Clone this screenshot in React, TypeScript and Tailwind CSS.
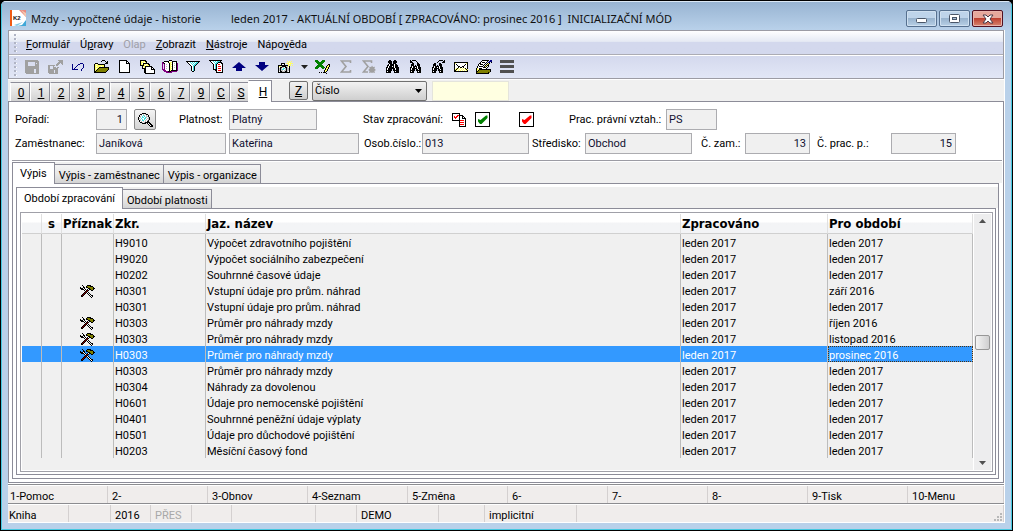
import React from "react";

const PALETTE: Record<string, string> = {
  k: "#000000",
  w: "#ffffff",
  g: "#a0a0a0",
  n: "#000080",
  y: "#ffff66",
  o: "#808000",
  r: "#ff0000",
  d: "#800000",
  p: "#800080",
  t: "#40e0e0",
  e: "#008000",
  c: "#c0c0c0",
  s: "#505050",
};

function Pixels({ rows }: { rows: string[] }) {
  const width = Math.max(...rows.map((r) => r.length));
  return (
    <svg
      width={width}
      height={rows.length}
      viewBox={`0 0 ${width} ${rows.length}`}
      shapeRendering="crispEdges"
      aria-hidden="true"
      className="shrink-0"
    >
      {rows.flatMap((row, y) =>
        row
          .split("")
          .map((c, x) =>
            PALETTE[c] ? <rect key={`${x}-${y}`} x={x} y={y} width="1" height="1" fill={PALETTE[c]} /> : null,
          ),
      )}
    </svg>
  );
}

const SAVE = [
  "ggggggggggggg.",
  "gggggggggggggg",
  "ggg.......gggg",
  "ggg.......g.gg",
  "ggg.......gggg",
  "ggg.......gggg",
  "gggggggggggggg",
  "gggggggggggggg",
  "gggggggggggggg",
  "ggggggggg..ggg",
  "ggggggggg..ggg",
  "ggggggggg..ggg",
  "ggggggggg..ggg",
  ".ggggggggggggg",
];
const SAVE_AS = [
  "..........ggggg",
  "...........gggg",
  "..........ggggg",
  ".........ggg.gg",
  "........ggg...g",
  "ggggggg.gg.....",
  "gg...g.........",
  "gg...ggg.gg....",
  "gg...ggggg.....",
  "gggggggggg.....",
  "gggggg.ggg.....",
  "gggggg.ggg.....",
  "gggggg.ggg.....",
  ".ggggggggg.....",
];
const UNDO = [
  "........nnn.",
  "n.....nn...n",
  "n....n.....n",
  "n...n......n",
  "n..n.......n",
  "n.n.......n.",
  "nnnnnn...n..",
  ".........n..",
];
const OPEN = [
  ".........kkk....",
  "........k...k.k.",
  ".............kk.",
  "..kkk.......kkk.",
  ".kywykkkkkkk....",
  ".kyyyyyyyyyk....",
  ".kywyyyywyyk....",
  ".kyyyykkkkkkkkkk",
  ".kywykoooooooook",
  ".kyykooooooooook",
  ".kykooooooooook.",
  ".kkooooooooook..",
  ".kkkkkkkkkkkk...",
];
const NEW_DOC = [
  "kkkkkkkk...",
  "kwwwwwwkk..",
  "kwwwwwwkwk.",
  "kwwwwwwkkkk",
  "kwwwwwwwwwk",
  "kwwwwwwwwwk",
  "kwwwwwwwwwk",
  "kwwwwwwwwwk",
  "kwwwwwwwwwk",
  "kwwwwwwwwwk",
  "kwwwwwwwwwk",
  "kwwwwwwwwwk",
  "kkkkkkkkkkk",
];
const COPIES = [
  "kkkkkk.........",
  "kywyykk........",
  "kyyywyk........",
  "kywkkkkkk......",
  "kyykyywykk.....",
  "kkkkywyyyk.....",
  "..kyykkkkkkk...",
  "..kwykwwwwwkk..",
  "..kkkkwwwwwkwk.",
  "....kkwwwwwkkkk",
  "....kkwwwwwwwwk",
  "....kkwwwwwwwwk",
  "....kkwwwwwwwwk",
  ".....kkkkkkkkkk",
];
const BOOK = [
  ".......kkk......",
  "..kkkkkwwwkkkkk.",
  "pkwwwwkyyykwwwk.",
  "ppkwwwwkywkwcwkp",
  "p.pwcwwkyykwwwkp",
  "p.pwwwwkywkwcwkp",
  "p.pwcwwkyykwwwkp",
  "p.pwwwwkywkwcwkp",
  "p.pwcwwkyykwwwkp",
  "pppwwwwkywkwwwkp",
  ".pppwwwkykkkkkkp",
  "..ppppkkkpppppp.",
  "....pppppp......",
];
const FILTER = [
  "kkkkkkkkkkkkkk",
  ".kwwtwtwtwttk.",
  "..kwwtwtwttk..",
  "...kwwtwttk...",
  "....kwwttk....",
  ".....kwtk.....",
  ".....kwtk.....",
  ".....kwtk.....",
  ".....kwtk.....",
  ".....kwtk.....",
  "......kk......",
];
const FILTER_DOC = [
  "kkkkkkkkkkkkk.",
  ".kwwtwtwtttk..",
  "..kwwtwttkkkk.",
  "...kwwttkwwwkk",
  "....kwtkwrrwwk",
  "....kwtkwwwwwk",
  "....kwtkwrrrwk",
  "....kwtkwwwwwk",
  "....kwtkwrrrwk",
  "....kkkkwwwwwk",
  "......kkwrrrwk",
  ".......kwwwwwk",
  ".......kkkkkkk",
];
const CAMERA = [
  "..........y.y.y.",
  "...........yyy..",
  "....kkkk.yyywyyy",
  "....kwwk...yyy..",
  ".kkkkkkkkkky.y.y",
  ".kyyckkkkccyk...",
  ".kwkkccwkkcwk...",
  ".kckcwttckcck...",
  ".kckcttwckcck...",
  ".kckccwcckcck...",
  ".kwkkccckkcwk...",
  ".kkkkkkkkkkkk...",
];
const EXCEL = [
  "eee....eee......",
  "eeee..eeee......",
  ".eeeeeeee.......",
  "..eeeeee........",
  "...eeee......kk.",
  "..eeeeee....kyk.",
  ".eeeeeeee..kyyk.",
  "eeee..eeee.kyk..",
  "eee....ee.kyyk..",
  "..........kyk...",
  ".........kyyk...",
  ".........kyk....",
  "....k.k.kkk.....",
  "...........k....",
];
const BINOCULARS = [
  "....kk...kk....",
  "...kkkk.kkkk...",
  "...kkkk.kkkk...",
  "....kkk.kkk....",
  "...kwkkkkwkk...",
  "..kkwkkkkwkkk..",
  "..kwkkkwkwkkk..",
  ".kkwkkkkkwkkkk.",
  ".kwkkkkkkkwkkk.",
  ".kwkkkk.kkwkkk.",
  ".kkkkkk.kkkkkk.",
  ".kwkkk...kwkkk.",
  ".kkkkk...kkkkk.",
];
const BINOCULARS_BACK = [
  "..k.kkkk.......",
  "..kk....k......",
  "..kkk....k.....",
  "....kk...kk....",
  "...kkk...kkk...",
  "...kkk.k.kkk...",
  "...kwkkkkwkk...",
  "..kkwkkwkwkkk..",
  "..kwkkkkkwkkk..",
  "..kwkkk.kkwkk..",
  "..kkkkk.kkkkk..",
  "..kwkk...kwkk..",
  "..kkkk...kkkk..",
];
const BINOCULARS_NEXT = [
  "........kkkk.k.",
  ".......k....kk.",
  "......k....kkk.",
  "...kk...kk.....",
  "..kkk...kkk....",
  "..kkk.k.kkk....",
  "..kwkkkkwkk....",
  ".kkwkkwkwkkk...",
  ".kwkkkkkwkkk...",
  ".kwkkk.kkwkk...",
  ".kkkkk.kkkkk...",
  ".kwkk...kwkk...",
  ".kkkk...kkkk...",
];
const MAIL = [
  "kkkkkkkkkkkkkk",
  "kywwwwwwwwwwyk",
  "kwkwwwwwwwwkwk",
  "kwwkwwwwwwkwwk",
  "kwwwkkwwkkwwwk",
  "kwwwkwkkwkwwwk",
  "kwykywywywykwk",
  "kykywywywywyky",
  "kkywywywywywyk",
  "kkkkkkkkkkkkkk",
];
const FOLDER_EDIT = [
  "......kkkkkkk.nn",
  ".....kwwwwwk.nnn",
  "....kwkkkwk.nn.k",
  "...kkwwwwk.kyk..",
  "..kwkkkwk.kyk...",
  "..kwwwwk.kykk...",
  ".kwkkkk.kykwk...",
  ".kwwwwwkkkwk....",
  "kywkkkwwwwk.....",
  "kyykkkkkkkkkkkk.",
  "kykoooooooooook.",
  "kkooooooooooook.",
  "koooooooooooko..",
  "kkkkkkkkkkkkk...",
];
const TOOLS = [
  "..k....kkkk....",
  "...k..koookkk..",
  "k..kk.kkoooook.",
  "kkkwk...kkoookk",
  ".kkkwk.kwkkook.",
  "....kwkdk..kk..",
  ".....kdk.......",
  "....kdkwk......",
  "...kdk.kwk.....",
  "..kdk...kwk....",
  ".kdk.....kwkk..",
  ".kk.......kwk..",
  "...........k...",
];
const STATUS_DOCS = [
  "kkkkkkkk.......",
  "kwwwwwwk.......",
  "kwwwwrrkkkk....",
  "kwrwrrwkwwkk...",
  "kwrrrwwkwwkwk..",
  "kwwrwwwkwwkkkk.",
  "kwwwwwwkwwwwwk.",
  "kkkkkkkkrrrrwk.",
  ".......kwwwwwk.",
  ".......krrrrwk.",
  ".......kwwwwwk.",
  ".......krrrrwk.",
  ".......kwwwwwk.",
  ".......kkkkkkk.",
];
const MAGNIFIER = [
  "....kkkk.......",
  "..kkwcwckk.....",
  ".kwcwtcwcwk....",
  ".kcwtwtwcck....",
  "kwcwttwtcwck...",
  "kcwtwwttwcck...",
  "kwcwtwtwcwck...",
  ".kcwttwcwck....",
  ".kwcwcwcwkk....",
  "..kkcwckkkkk...",
  "....kkkk.kwkk..",
  "..........kwkk.",
  "...........kwkk",
  "............kkk",
];

const arrow = (d: string) => (
  <svg width="14" height="9" viewBox="0 0 14 9" aria-hidden="true">
    <path d={d} fill="#000080" />
  </svg>
);

const TOOLBAR: { name: string; icon: React.ReactNode }[] = [
  { name: "Uložit", icon: <Pixels rows={SAVE} /> },
  { name: "Uložit jako", icon: <Pixels rows={SAVE_AS} /> },
  { name: "Zpět", icon: <Pixels rows={UNDO} /> },
  { name: "Otevřít", icon: <Pixels rows={OPEN} /> },
  { name: "Nový", icon: <Pixels rows={NEW_DOC} /> },
  { name: "Kopie", icon: <Pixels rows={COPIES} /> },
  { name: "Kniha", icon: <Pixels rows={BOOK} /> },
  { name: "Filtr", icon: <Pixels rows={FILTER} /> },
  { name: "Filtr seznamu", icon: <Pixels rows={FILTER_DOC} /> },
  { name: "Předchozí", icon: arrow("M7 0 L14 6 H10 V9 H4 V6 H0 Z") },
  { name: "Další", icon: arrow("M7 9 L14 3 H10 V0 H4 V3 H0 Z") },
  { name: "Snímek", icon: <Pixels rows={CAMERA} /> },
];
const TOOLBAR_2: { name: string; icon: React.ReactNode }[] = [
  { name: "Excel", icon: <Pixels rows={EXCEL} /> },
  {
    name: "Součet",
    icon: (
      <svg width="12" height="13" viewBox="0 0 12 13" aria-hidden="true">
        <path d="M10.5 3V1H1.5L6 6.5L1.5 12H10.5V10" fill="none" stroke="#a0a0a0" strokeWidth="1.6" />
      </svg>
    ),
  },
  {
    name: "Součet výběru",
    icon: (
      <svg width="14" height="13" viewBox="0 0 14 13" aria-hidden="true">
        <path d="M9.5 3V1H1.5L6 6.5L1.5 12H6" fill="none" stroke="#a0a0a0" strokeWidth="1.6" />
        <path d="M10 5.500l1 1.500 2-.3-.6 2 1.6 1.3-1.6 1 .6 2-2-.4-1 .4-1-.4-2 .4.6-2-1.4-1 1.4-1.3-.4-2 2 .3z" fill="#a0a0a0" />
      </svg>
    ),
  },
  { name: "Hledat", icon: <Pixels rows={BINOCULARS} /> },
  { name: "Hledat zpět", icon: <Pixels rows={BINOCULARS_BACK} /> },
  { name: "Hledat dál", icon: <Pixels rows={BINOCULARS_NEXT} /> },
  { name: "Pošta", icon: <Pixels rows={MAIL} /> },
  { name: "Dokumenty", icon: <Pixels rows={FOLDER_EDIT} /> },
  {
    name: "Nabídka",
    icon: (
      <svg width="14" height="13" viewBox="0 0 14 13" aria-hidden="true" shapeRendering="crispEdges">
        <path d="M0 0h14v3H0zM0 5h14v3H0zM0 10h14v3H0z" fill="#505050" />
      </svg>
    ),
  },
];

const MENUS: [string, string, string, boolean?][] = [
  ["", "F", "ormulář"],
  ["Ú", "p", "ravy"],
  ["Olap", "", "", true],
  ["", "Z", "obrazit"],
  ["", "N", "ástroje"],
  ["Nápo", "v", "ěda"],
];

const PAGES = ["0", "1", "2", "3", "P", "4", "5", "6", "7", "9", "C", "S"];

const ROWS: [string, string, string, boolean?][] = [
  ["H9010", "Výpočet zdravotního pojištění", "leden 2017"],
  ["H9020", "Výpočet sociálního zabezpečení", "leden 2017"],
  ["H0202", "Souhrnné časové údaje", "leden 2017"],
  ["H0301", "Vstupní údaje pro prům. náhrad", "září 2016", true],
  ["H0301", "Vstupní údaje pro prům. náhrad", "leden 2017"],
  ["H0303", "Průměr pro náhrady mzdy", "říjen 2016", true],
  ["H0303", "Průměr pro náhrady mzdy", "listopad 2016", true],
  ["H0303", "Průměr pro náhrady mzdy", "prosinec 2016", true],
  ["H0303", "Průměr pro náhrady mzdy", "leden 2017"],
  ["H0304", "Náhrady za dovolenou", "leden 2017"],
  ["H0601", "Údaje pro nemocenské pojištění", "leden 2017"],
  ["H0401", "Souhrnné peněžní údaje výplaty", "leden 2017"],
  ["H0501", "Údaje pro důchodové pojištění", "leden 2017"],
  ["H0203", "Měsíční časový fond", "leden 2017"],
];
const SELECTED = 7;

const FUNCTIONS = ["1-Pomoc", "2-", "3-Obnov", "4-Seznam", "5-Změna", "6-", "7-", "8-", "9-Tisk", "10-Menu"];

const fieldBase = "h-[21px] shrink-0 border border-[#acacb0] bg-[#f0f0f0] text-[#101030] outline-none pl-[2px] pr-[3px]";

function ToolButton({ name, icon }: { name: string; icon: React.ReactNode }) {
  return (
    <button type="button" aria-label={name} className="flex h-4 w-4 items-center justify-center">
      {icon}
    </button>
  );
}

function StatusCheck({ label, color }: { label: string; color: string }) {
  return (
    <label className="relative block h-[15px] w-[15px]">
      <input
        type="checkbox"
        aria-label={label}
        defaultChecked
        className="block h-[15px] w-[15px] appearance-none border border-black bg-white"
      />
      <svg
        width="15"
        height="15"
        viewBox="0 0 15 15"
        aria-hidden="true"
        className="pointer-events-none absolute inset-0"
      >
        <path d="M3 7l2.5 1L11 3.5h1.5v2.5L6.5 12H5L3 9.500z" fill={color} />
      </svg>
    </label>
  );
}

function Grip() {
  return (
    <svg width="3" height="18" viewBox="0 0 3 18" aria-hidden="true" shapeRendering="crispEdges">
      {[0, 4, 8, 12, 16].map((y) => (
        <g key={y}>
          <rect x="1" y={y + 1} width="2" height="1" fill="#fff" />
          <rect x="0" y={y} width="2" height="2" fill="#b0b4c4" />
        </g>
      ))}
    </svg>
  );
}

function Tab({ label, active }: { label: string; active?: boolean }) {
  return (
    <button
      type="button"
      role="tab"
      aria-selected={!!active}
      className={
        active
          ? "relative z-10 -mb-px h-[22px] border border-b-0 border-[#8c8c98] bg-white px-[7px]"
          : "h-[19px] border border-b-0 border-l-0 border-[#8c8c98] bg-linear-to-b from-[#f4f4f4] via-[#e8e8e8] to-[#d4d4d4] pt-[3px] pr-[3px] pl-[4px]"
      }
    >
      {label}
    </button>
  );
}

function TitleButton({ name, close, children }: { name: string; close?: boolean; children: React.ReactNode }) {
  return (
    <button
      type="button"
      aria-label={name}
      className={
        close
          ? "flex h-[17px] w-[31px] items-center justify-center rounded-xs border border-[#521020] bg-linear-to-b from-[#e6a89c] from-45% via-[#bd4030] via-50% to-[#d68470] shadow-[inset_0_0_0_1px_#e8b4ac]"
          : "flex h-[17px] w-[31px] items-center justify-center rounded-xs border border-[#56708f] bg-linear-to-b from-[#bed4ea] from-45% via-[#98b3ce] via-50% to-[#b8d0e6] shadow-[inset_0_0_0_1px_#cfe0f0]"
      }
    >
      {children}
    </button>
  );
}

export default function App() {
  return (
    <div className="min-h-screen bg-black font-['Roboto','Noto_Sans',sans-serif] text-[11px] leading-4 text-black">
      <div className="flex min-h-screen flex-col overflow-hidden rounded-t-md border border-black">
        <div className="flex flex-1 flex-col border border-t-0 border-[#45c8e0] bg-[#b9d1ea] px-[6px] pb-[6px]">
          <header className="-mx-[6px] flex h-[29px] items-center border-t border-[#dbe8f5] bg-linear-to-b from-[#98b4d2] to-[#b9d1ea] pr-[8px] pl-[8px]">
            <svg width="17" height="17" viewBox="0 0 17 17" aria-hidden="true" className="mt-1 shrink-0">
              <rect width="16" height="16" fill="#fff" />
              <rect width="2" height="16" fill="#f05a14" />
              <path d="M9 0h7v7z" fill="#e88a80" />
              <path d="M11 0l5 7V3z" fill="#f4c8b0" />
              <path d="M16 10v6h-9l5-1z" fill="#40a8d8" />
              <path d="M4 15l9-3-6 4z" fill="#80c8e8" />
              <text x="3" y="10" fontSize="6" fontWeight="700" fontFamily="Liberation Sans, sans-serif" fill="#111">
                K2
              </text>
            </svg>
            <h1 className="ml-[4px] flex-1 pt-[5px] font-['Noto_Sans','Open_Sans',sans-serif] whitespace-pre text-[#101010]">
              <span className="inline-block w-[200px]">Mzdy - vypočtené údaje - historie</span>
              leden 2017 - AKTUÁLNÍ OBDOBÍ [ ZPRACOVÁNO: prosinec 2016 ]{"  "}INICIALIZAČNÍ MÓD
            </h1>
            <div className="flex gap-[2px] pt-[5px]">
              <TitleButton name="Minimalizovat">
                <svg width="12" height="6" viewBox="0 0 12 6" aria-hidden="true" className="mt-1">
                  <rect x="0.500" y="0.500" width="10" height="4" rx="1" fill="#fff" stroke="#4a5668" />
                </svg>
              </TitleButton>
              <TitleButton name="Maximalizovat">
                <svg width="11" height="9" viewBox="0 0 11 9" aria-hidden="true">
                  <rect x="0.500" y="0.500" width="10" height="8" rx="1" fill="#fff" stroke="#4a5668" />
                  <rect x="3.500" y="3.500" width="4" height="2" fill="#a8c0d8" stroke="#4a5668" />
                </svg>
              </TitleButton>
              <TitleButton name="Zavřít" close>
                <svg width="12" height="10" viewBox="0 0 12 10" aria-hidden="true">
                  <path d="M1 1h3l2 2 2-2h3L8 5l3 4H8L6 7 4 9H1l3-4z" fill="#fff" stroke="#4a3a48" strokeWidth="1" />
                </svg>
              </TitleButton>
            </div>
          </header>

          <main className="flex flex-1 flex-col bg-white pr-px">
            <div className="border border-[#9c9ca4]">
              <nav
                aria-label="Hlavní nabídka"
                className="flex h-[23px] items-center gap-[9px] bg-linear-to-b from-white from-0% via-[#e6eaf4] via-45% to-[#d3d8ed] to-50% pl-[5px]"
              >
                <Grip />
                <div className="flex gap-[10px] pt-[5px]">
                  {MENUS.map(([a, u, b, disabled]) => (
                    <button
                      key={a + u + b}
                      type="button"
                      disabled={disabled}
                      className={disabled ? "text-[#a0a0a8]" : "text-black"}
                    >
                      {a}
                      <span className="underline">{u}</span>
                      {b}
                    </button>
                  ))}
                </div>
              </nav>
              <div className="flex h-6 items-center border-t border-[#acacb4] bg-linear-to-b from-[#d3d8ed] to-[#e2e7f6] pl-[5px] shadow-[inset_0_1px_0_#fff]">
                <Grip />
                <div role="toolbar" aria-label="Nástroje" className="ml-[7px] flex items-center gap-[7px]">
                  {TOOLBAR.map((t) => (
                    <ToolButton key={t.name} {...t} />
                  ))}
                  <button type="button" aria-label="Další možnosti snímku" className="flex w-2 justify-center">
                    <svg width="7" height="4" viewBox="0 0 7 4" aria-hidden="true">
                      <path d="M0 0h7L3.500 4z" fill="#202020" />
                    </svg>
                  </button>
                  {TOOLBAR_2.map((t) => (
                    <ToolButton key={t.name} {...t} />
                  ))}
                </div>
              </div>
            </div>

            <div className="mt-px flex h-[21px] items-end bg-[#f0f0f0] pl-[2px]">
              <div role="tablist" aria-label="Strany" className="flex items-end">
                {PAGES.map((p) => (
                  <button
                    key={p}
                    type="button"
                    role="tab"
                    aria-selected={false}
                    className="h-[19px] w-5 border border-b-0 border-[#8c8c98] border-l-white bg-linear-to-b from-[#f4f4f4] to-[#d2d2d2] pt-[2px] pl-[2px] text-[12px] underline"
                  >
                    {p}
                  </button>
                ))}
                <button
                  type="button"
                  role="tab"
                  aria-selected
                  className="relative z-10 -mb-px -ml-[2px] h-[22px] w-6 border border-b-0 border-[#8c8c98] border-l-white bg-white pl-[6px] text-[12px] underline"
                >
                  H
                </button>
              </div>
              <button
                type="button"
                className="mb-px ml-[17px] h-[19px] w-[19px] rounded-xs border border-[#707070] bg-linear-to-b from-[#f2f2f2] to-[#cfcfcf] text-[12px] underline"
              >
                Z
              </button>
              <div className="relative ml-1">
                <select
                  aria-label="Třídění"
                  className="block h-5 w-[115px] appearance-none rounded-xs border border-[#707070] bg-linear-to-b from-[#f2f2f2] to-[#cfcfcf] pl-[2px] leading-4"
                >
                  <option>Číslo</option>
                </select>
                <svg
                  width="7"
                  height="4"
                  viewBox="0 0 7 4"
                  aria-hidden="true"
                  className="pointer-events-none absolute top-2 right-[5px]"
                >
                  <path d="M0 0h7L3.500 4z" fill="#000" />
                </svg>
              </div>
              <input
                aria-label="Hledaná hodnota"
                className="ml-[5px] h-5 w-[77px] border border-[#e4e4dc] bg-[#ffffe1] px-1 outline-none"
              />
            </div>

            <section className="flex flex-1 flex-col border border-[#8c8c98] pb-[3px]">
              <form className="flex flex-col gap-[3px] pt-[7px] pb-[6px] pl-[6px]">
                <div className="flex items-center">
                  <label htmlFor="poradi" className="w-[81px]">Pořadí:</label>
                  <input id="poradi" readOnly value="1" className={`${fieldBase} w-[31px] text-right`} />
                  <button
                    type="button"
                    aria-label="Vybrat"
                    className="ml-[7px] flex h-[21px] w-[22px] items-center justify-center rounded-xs border border-[#8a8a8a] bg-linear-to-b from-[#f4f4f4] to-[#d4d4d4]"
                  >
                    <Pixels rows={MAGNIFIER} />
                  </button>
                  <label htmlFor="platnost" className="ml-[23px] w-[50px]">Platnost:</label>
                  <input id="platnost" readOnly value="Platný" className={`${fieldBase} w-[88px]`} />
                  <span className="ml-[46px] w-[89px]">Stav zpracování:</span>
                  <Pixels rows={STATUS_DOCS} />
                  <div className="ml-[8px] flex gap-[29px]">
                    <StatusCheck label="Zpracováno" color="#008000" />
                    <StatusCheck label="Uzavřeno" color="#ff0000" />
                  </div>
                  <label htmlFor="vztah" className="ml-[35px] w-[97px]">Prac. právní vztah.:</label>
                  <input id="vztah" readOnly value="PS" className={`${fieldBase} w-[51px]`} />
                </div>
                <div className="flex items-center">
                  <label htmlFor="prijmeni" className="w-[81px]">Zaměstnanec:</label>
                  <input id="prijmeni" readOnly value="Janíková" className={`${fieldBase} w-[130px]`} />
                  <input aria-label="Jméno" readOnly value="Kateřina" className={`${fieldBase} ml-[3px] w-[130px]`} />
                  <label htmlFor="osob" className="ml-[5px] w-[58px]">Osob.číslo.:</label>
                  <input id="osob" readOnly value="013" className={`${fieldBase} w-[107px]`} />
                  <label htmlFor="stredisko" className="ml-[3px] w-[53px]">Středisko:</label>
                  <input id="stredisko" readOnly value="Obchod" className={`${fieldBase} w-[107px]`} />
                  <label htmlFor="czam" className="ml-[9px] w-[44px]">Č. zam.:</label>
                  <input id="czam" readOnly value="13" className={`${fieldBase} w-[65px] text-right`} />
                  <label htmlFor="cprac" className="ml-[7px] w-[74px]">Č. prac. p.:</label>
                  <input id="cprac" readOnly value="15" className={`${fieldBase} w-[65px] text-right`} />
                </div>
              </form>

              <div className="mr-px ml-[3px] border-t border-[#9c9ca4] pt-px">
                <div role="tablist" aria-label="Výpis" className="flex h-[21px] items-end bg-[#f0f0f0]">
                  <Tab label="Výpis" active />
                  <Tab label="Výpis - zaměstnanec" />
                  <Tab label="Výpis - organizace" />
                </div>
              </div>
              <div className="mr-[4px] ml-[3px] flex flex-1 flex-col border border-[#8c8c98] pt-[3px] pb-[3px] pl-[3px]">
                <div role="tablist" aria-label="Období" className="flex h-[21px] items-end bg-[#f0f0f0]">
                  <Tab label="Období zpracování" active />
                  <Tab label="Období platnosti" />
                </div>
                <div className="mr-[2px] flex flex-1 flex-col border border-[#8c8c98] pt-[3px] pr-[2px] pb-[2px] pl-[3px]">
                  <div className="flex flex-1 border border-[#a0a0a8] p-px">
                    <div className="min-w-0 flex-1 bg-[#f0f0f0]">
                      <table className="w-full table-fixed border-separate border-spacing-0 text-left">
                        <colgroup>
                          <col className="w-5" />
                          <col className="w-5" />
                          <col className="w-[52px]" />
                          <col className="w-[92px]" />
                          <col />
                          <col className="w-[147px]" />
                          <col className="w-[145px]" />
                        </colgroup>
                        <thead className="font-['DejaVu_Sans_Condensed','Noto_Sans',sans-serif] text-[13px]">
                          <tr>
                            {["", "s", "Příznak", "Zkr.", "Jaz. název", "Zpracováno", "Pro období"].map((h, i) => (
                              <th
                                key={i}
                                scope="col"
                                className={`h-5 border-r border-b border-r-[#e0e0e0] border-b-[#d0d0d0] bg-linear-to-b from-white from-40% to-[#f3f4f6] to-50% p-0 font-bold whitespace-nowrap ${
                                  i === 1 || i === 2 ? "text-center" : "pl-px"
                                }`}
                              >
                                {h}
                              </th>
                            ))}
                          </tr>
                        </thead>
                        <tbody className="[&_td]:h-4 [&_td]:border-r [&_td]:border-[#bcbcbc] [&_td]:p-0 [&_td]:pt-[3px] [&_td]:pl-px [&_td]:leading-[13px] [&_td]:whitespace-nowrap">
                          {ROWS.map(([code, name, period, flagged], i) => (
                            <tr key={i} className={i === SELECTED ? "bg-[#3399ff] text-white" : ""}>
                              <td></td>
                              <td></td>
                              <td>
                                {flagged && (
                                  <span className="flex justify-center pr-[2px]">
                                    <Pixels rows={TOOLS} />
                                  </span>
                                )}
                              </td>
                              <td>{code}</td>
                              <td>{name}</td>
                              <td>leden 2017</td>
                              <td className={i === SELECTED ? "outline-1 -outline-offset-1 outline-[#4a3010] outline-dotted" : ""}>
                                {period}
                              </td>
                            </tr>
                          ))}
                        </tbody>
                      </table>
                    </div>
                    <div className="ml-px flex w-[17px] flex-col items-center bg-[#ededee]">
                      <button type="button" aria-label="Nahoru" className="flex h-[14px] w-full items-center justify-center">
                        <svg width="7" height="4" viewBox="0 0 7 4" aria-hidden="true">
                          <path d="M3.500 0L7 4H0z" fill="#505050" />
                        </svg>
                      </button>
                      <div className="flex w-full flex-1 flex-col items-center">
                        <div className="grow-[103]" />
                        <div className="h-[15px] w-[15px] rounded-xs border border-[#979797] bg-linear-to-r from-[#f4f4f4] to-[#cfcfd0]" />
                        <div className="grow-[103]" />
                      </div>
                      <button type="button" aria-label="Dolů" className="flex h-[14px] w-full items-center justify-center">
                        <svg width="7" height="4" viewBox="0 0 7 4" aria-hidden="true">
                          <path d="M0 0h7L3.500 4z" fill="#505050" />
                        </svg>
                      </button>
                    </div>
                  </div>
                </div>
              </div>
            </section>

            <div className="mt-px grid grid-cols-[repeat(9,100px)_1fr] border-t border-[#8c8c90] pt-px">
              {FUNCTIONS.map((f, i) => (
                <button
                  key={f}
                  type="button"
                  className={`h-[17px] border-r border-[#d4d0d0] bg-[#f0edec] pt-[4px] text-left leading-[13px] ${i === 0 ? "pl-[2px]" : "pl-[4px]"}`}
                >
                  {f}
                </button>
              ))}
            </div>
            <footer className="flex border-t border-[#8c8c90] py-px leading-[21px] [&>*]:h-[17px] [&>*]:shrink-0 [&>*]:border-r [&>*]:border-[#d4d0d0] [&>*]:bg-[#f0edec]">
              <span className="w-[61px] pl-px">Kniha</span>
              <span className="w-[42px]" />
              <span className="w-10 pl-[4px]">2016</span>
              <span className="w-[41px] pl-[4px] text-[#a8a8a8]">PŘES</span>
              <span className="w-10" />
              <span className="w-[84px]" />
              <span className="w-[41px]" />
              <span className="w-[82px] pl-[4px]">DEMO</span>
              <span className="w-[46px]" />
              <span className="w-[92px] pl-[4px]">implicitní</span>
              <span className="flex flex-1 items-end justify-end">
                <svg width="9" height="9" viewBox="0 0 9 9" aria-hidden="true" shapeRendering="crispEdges">
                  <path d="M6 0h2v2H6zM3 3h2v2H3zM6 3h2v2H6zM0 6h2v2H0zM3 6h2v2H3zM6 6h2v2H6z" fill="#b8b8b8" />
                </svg>
              </span>
            </footer>
          </main>
        </div>
      </div>
    </div>
  );
}
